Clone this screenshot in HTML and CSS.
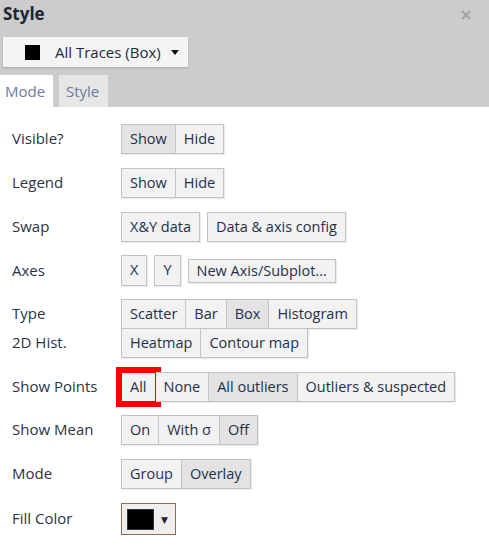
FILE: index.html
```html
<!DOCTYPE html>
<html>
<head>
<meta charset="utf-8">
<link rel="stylesheet" href="styles.css">
</head>
<body>
<div class="panel">
  <div class="header">
    <div class="titlebar">
      <span class="title">Style</span>
      <svg class="close" width="10" height="10" viewBox="0 0 10 10"><path d="M1 1L9 9M9 1L1 9" stroke="#a3a3a3" stroke-width="2"/></svg>
    </div>
    <div class="dropdown">
      <span class="swatch"></span>
      <span class="dd-text">All Traces (Box)</span>
      <span class="caret"></span>
    </div>
    <div class="tabs">
      <div class="tab active">Mode</div>
      <div class="tab second-tab">Style</div>
    </div>
  </div>
  <div class="content">
    <div class="row">
      <div class="label">Visible?</div>
      <div class="controls"><div class="group"><span class="btn on">Show</span><span class="btn">Hide</span></div></div>
    </div>
    <div class="row">
      <div class="label">Legend</div>
      <div class="controls"><div class="group"><span class="btn">Show</span><span class="btn">Hide</span></div></div>
    </div>
    <div class="row">
      <div class="label">Swap</div>
      <div class="controls sep"><span class="btn single">X&amp;Y data</span><span class="btn single">Data &amp; axis config</span></div>
    </div>
    <div class="row axes">
      <div class="label">Axes</div>
      <div class="controls sep"><span class="btn single tall">X</span><span class="btn single tall">Y</span><span class="btn single short">New Axis/Subplot...</span></div>
    </div>
    <div class="row type">
      <div class="labels"><div class="label sub">Type</div><div class="label sub">2D Hist.</div></div>
      <div class="stack">
        <div class="group"><span class="btn">Scatter</span><span class="btn">Bar</span><span class="btn on">Box</span><span class="btn">Histogram</span></div>
        <div class="group second"><span class="btn">Heatmap</span><span class="btn">Contour map</span></div>
      </div>
    </div>
    <div class="row">
      <div class="label">Show Points</div>
      <div class="controls"><div class="group"><span class="btn hl">All</span><span class="btn">None</span><span class="btn on">All outliers</span><span class="btn">Outliers &amp; suspected</span></div></div>
    </div>
    <div class="row mean">
      <div class="label">Show Mean</div>
      <div class="controls"><div class="group"><span class="btn">On</span><span class="btn">With σ</span><span class="btn on">Off</span></div></div>
    </div>
    <div class="row">
      <div class="label">Mode</div>
      <div class="controls"><div class="group"><span class="btn">Group</span><span class="btn on">Overlay</span></div></div>
    </div>
    <div class="row fill">
      <div class="label">Fill Color</div>
      <div class="controls"><div class="colorbtn"><span class="colorsw"></span><span class="colorcaret">▼</span></div></div>
    </div>
  </div>
</div>
</body>
</html>
```
FILE: styles.css
```css
html, body {
  margin: 0;
  padding: 0;
  background: #ffffff;
}
body {
  font-family: "Open Sans", "DejaVu Sans", sans-serif;
  font-size: 15px;
  color: #2a3446;
}
.panel {
  width: 489px;
}
.header {
  background: #cccccc;
  display: flex;
  flex-direction: column;
}
.titlebar {
  height: 30px;
  display: flex;
  align-items: center;
  justify-content: space-between;
  padding: 0 18px 0 3px;
}
.title {
  font-weight: 700;
  font-size: 17px;
  color: #1d2533;
  line-height: 20px;
  margin-top: -3px;
}
.close {
  margin-top: -1px;
}
.dropdown {
  margin: 7px 0 0 3px;
  width: 185px;
  height: 30px;
  box-sizing: border-box;
  background: #f4f4f4;
  box-shadow: 0 1px 2px rgba(0,0,0,0.18);
  display: flex;
  align-items: center;
}
.swatch {
  width: 15px;
  height: 15px;
  background: #000;
  margin-left: 22px;
}
.dd-text {
  margin-left: 15px;
  color: #1f2a3c;
}
.caret {
  margin-left: 10px;
  width: 0;
  height: 0;
  border-left: 4px solid transparent;
  border-right: 4px solid transparent;
  border-top: 5px solid #111;
}
.tabs {
  margin-top: 8px;
  display: flex;
  gap: 6px;
  height: 32px;
}
.tab {
  width: 53px;
  box-sizing: border-box;
  padding: 0 0 0 5px;
  display: flex;
  align-items: center;
  background: #e6e6e6;
  color: #6c7c9b;
}
.tab.active {
  background: #ffffff;
}
.tab.second-tab {
  width: 49px;
  padding-left: 7px;
}
.content {
  padding: 17px 0 0 0;
  display: flex;
  flex-direction: column;
  gap: 14px;
  font-size: 14.5px;
}
.row {
  display: flex;
  align-items: center;
}
.row.axes {
  margin-top: -1px;
}
.row.type {
  margin-top: -1px;
}
.row.mean {
  margin-top: -1px;
}
.label {
  width: 109px;
  padding-left: 12px;
  box-sizing: content-box;
  flex: none;
  margin-top: -2px;
  font-size: 15px;
}
.labels {
  display: flex;
  flex-direction: column;
  width: 121px;
  flex: none;
}
.label.sub {
  height: 29px;
  display: flex;
  align-items: center;
  margin-top: 0;
}
.labels .label.sub:first-child {
  margin-top: -2px;
}
.controls {
  display: flex;
  align-items: center;
}
.controls.sep {
  gap: 7px;
}
.group {
  display: flex;
  box-shadow: 1px 1px 1px rgba(0,0,0,0.08);
}
.btn {
  display: block;
  height: 30px;
  box-sizing: border-box;
  line-height: 27px;
  padding: 0 8px;
  background: #f2f2f2;
  border: 1px solid #c3c3c3;
  color: #23304a;
  white-space: nowrap;
}
.btn.tall {
  height: 31px;
  line-height: 28px;
}
.btn.short {
  height: 24px;
  line-height: 21px;
}
.group .btn + .btn {
  border-left: none;
}
.btn.on {
  background: #e3e3e3;
}
.btn.single {
  box-shadow: 1px 1px 1px rgba(0,0,0,0.08);
}
.btn.hl {
  outline: 6px solid #ff0000;
  outline-offset: -1px;
}
.stack {
  display: flex;
  flex-direction: column;
  align-items: flex-start;
}
.group.second {
  margin-top: -1px;
}
.colorbtn {
  width: 55px;
  height: 32px;
  box-sizing: border-box;
  border: 1px solid #8c6d54;
  background: #efefef;
  display: flex;
  align-items: center;
}
.colorsw {
  width: 27px;
  height: 21px;
  box-sizing: border-box;
  background: #000;
  border: 1px solid #333;
  margin-left: 5px;
}
.colorcaret {
  font-size: 9px;
  margin-left: 7px;
  color: #1c2230;
}
```
